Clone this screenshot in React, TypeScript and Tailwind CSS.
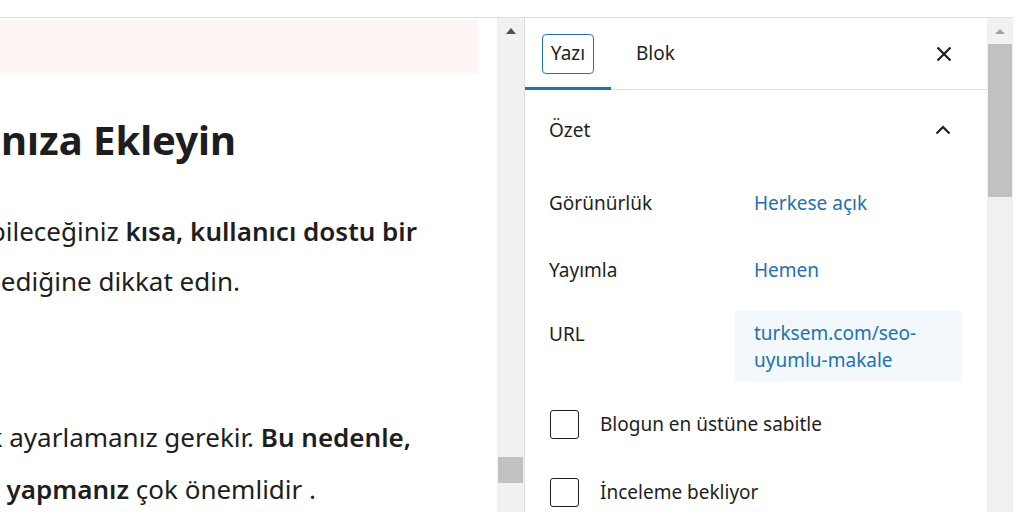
import React from 'react';

const font = { fontFamily: '"Noto Sans", "Open Sans", sans-serif' };

// a line of body text that is cut at the left edge of the editor
const Line = ({ end, className, children }: { end: number; className?: string; children: React.ReactNode }) => (
  <div className={`flex justify-end overflow-visible whitespace-nowrap ${className ?? ''}`} style={{ width: end }}>
    <span>{children}</span>
  </div>
);

const Checkbox = ({ label, className }: { label: string; className?: string }) => (
  <div className={`flex items-center gap-[21px] pl-[25px] ${className ?? ''}`}>
    <span className="block h-[29px] w-[29px] rounded-[3px] border-[1.5px] border-[#1e1e1e]" />
    <span className="text-[19px] text-[#1e1e1e]">{label}</span>
  </div>
);

const Row = ({ label, value, className }: { label: string; value: string; className?: string }) => (
  <div className={`flex items-center text-[19px] ${className ?? ''}`}>
    <span className="w-[229px] pl-[24px] text-[#1e1e1e]">{label}</span>
    <span className="text-[#2271b1]">{value}</span>
  </div>
);

export default function App() {
  return (
    <div className="flex h-[512px] w-[1024px] flex-col overflow-hidden bg-white" style={font}>
      <div className="h-[18px] w-[1013px] shrink-0 border-b border-[#dedede]" />
      <div className="flex h-[494px]">
        {/* editor canvas */}
        <div className="w-[497px] shrink-0 overflow-hidden text-[#1e1e1e]">
          <div className="mt-[2px] h-[53px] w-[478px] bg-[#fdf6f5]" />
          <Line end={236} className="mt-[42px] text-[40px] font-bold leading-[50px]">nıza Ekleyin</Line>
          <div className="mt-[41px] text-[26px] leading-[50px]">
            <Line end={417}>
              bileceğiniz <b className="font-semibold">kısa, kullanıcı dostu bir</b>
            </Line>
            <Line end={240}>ediğine dikkat edin.</Line>
          </div>
          <div className="mt-[105px] text-[26px] leading-[52px]">
            <Line end={411}>
              k ayarlamanız gerekir. <b className="font-semibold">Bu nedenle,</b>
            </Line>
            <Line end={316}>
              <b className="font-semibold">yapmanız</b> çok önemlidir .
            </Line>
          </div>
        </div>

        {/* editor scrollbar */}
        <div className="flex w-[28px] shrink-0 flex-col border-r border-[#dcdcdc] bg-[#f1f1f1]">
          <div className="flex h-[26px] items-center justify-center pl-[1px]">
            <svg width="10" height="6" viewBox="0 0 10 6">
              <path d="M0 6 L5 0 L10 6 Z" fill="#505050" />
            </svg>
          </div>
          <div className="mb-[29px] ml-[1px] mt-auto h-[26px] w-[25px] bg-[#c1c1c1]" />
        </div>

        {/* settings sidebar */}
        <div className="w-[462px] shrink-0">
          <div className="flex h-[72px] items-stretch border-b border-[#e0e0e0]">
            <div className="relative flex w-[86px] items-center pl-[17px]">
              <span className="flex h-[40px] w-[52px] items-center justify-center rounded-[4px] border-[1.5px] border-[#2271b1] text-[19px] text-[#1e1e1e]">
                Yazı
              </span>
              <span className="absolute bottom-[-1px] left-0 right-0 h-[3px] bg-[#2271b1]" />
            </div>
            <div className="flex items-center pl-[25px] text-[19px] text-[#1e1e1e]">Blok</div>
            <div className="ml-auto flex items-center pr-[35px]">
              <svg width="16" height="16" viewBox="0 0 16 16">
                <path d="M1.5 1.5 L14.5 14.5 M14.5 1.5 L1.5 14.5" stroke="#1e1e1e" strokeWidth="2.2" />
              </svg>
            </div>
          </div>

          <div className="flex h-[80px] items-center justify-between pl-[24px] pr-[36px] text-[19px] text-[#1e1e1e]">
            <span>Özet</span>
            <svg width="16" height="10" viewBox="0 0 16 10">
              <path d="M1.5 8.5 L8 2 L14.5 8.5" stroke="#1e1e1e" strokeWidth="2.2" fill="none" />
            </svg>
          </div>

          <Row label="Görünürlük" value="Herkese açık" className="h-[66px]" />
          <Row label="Yayımla" value="Hemen" className="h-[68px]" />

          <div className="mt-[7px] flex text-[19px] leading-[27px]">
            <span className="w-[210px] pl-[24px] pt-[10px] text-[#1e1e1e]">URL</span>
            <div className="h-[71px] w-[227px] bg-[#f3f8fc] pl-[19px] pt-[9px] text-[#2271b1]">
              turksem.com/seo-
              <br />
              uyumlu-makale
            </div>
          </div>

          <Checkbox label="Blogun en üstüne sabitle" className="mt-[28px]" />
          <Checkbox label="İnceleme bekliyor" className="mt-[39px]" />
        </div>

        {/* sidebar scrollbar */}
        <div className="flex w-[26px] shrink-0 flex-col bg-[#f1f1f1]">
          <div className="flex h-[26px] items-center justify-center">
            <svg width="10" height="5" viewBox="0 0 10 5">
              <path d="M0 5 L5 0 L10 5 Z" fill="#a3a3a3" />
            </svg>
          </div>
          <div className="mx-[1px] h-[153px] bg-[#c1c1c1]" />
        </div>
      </div>
    </div>
  );
}
